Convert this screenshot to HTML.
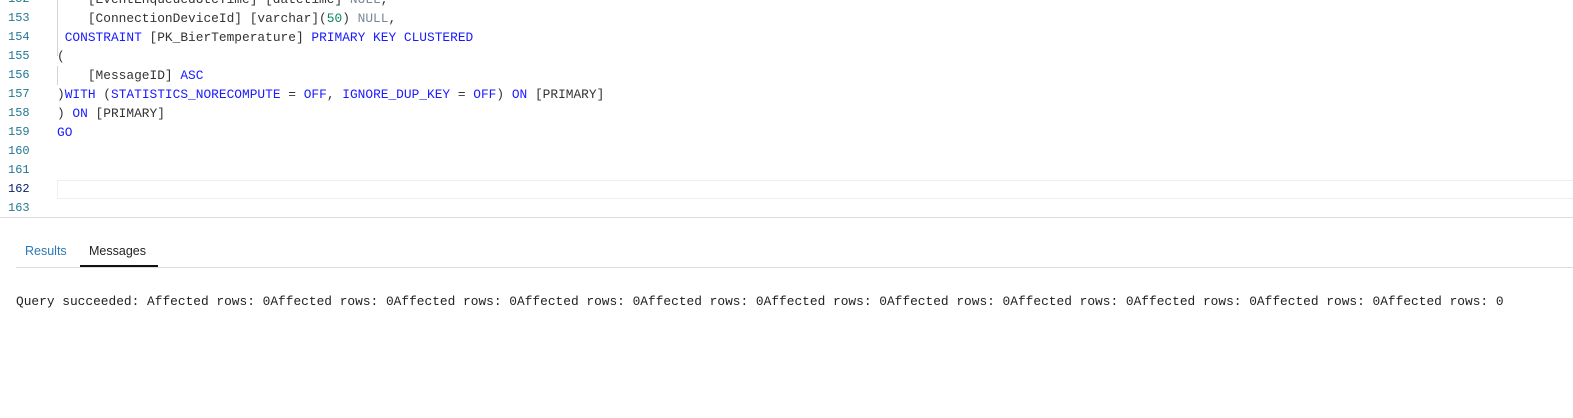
<!DOCTYPE html>
<html><head><meta charset="utf-8"><style>
body{margin:0;width:1573px;height:418px;background:#fff;overflow:hidden;position:relative;font-family:"Liberation Mono",monospace}
.ln{position:absolute;left:8px;font-size:12px;color:#237893;line-height:19px}
.cd{position:absolute;left:57px;font-size:12.85px;color:#333;line-height:19px;white-space:pre}
.k{color:#1a1aff}.g{color:#778899}.n{color:#09885a}
.guide{position:absolute;left:57px;width:1px;background:#d3d3d3}
</style></head><body>
<div class="guide" style="top:-1px;height:57px"></div>
<div class="guide" style="top:66px;height:19px"></div>
<div style="position:absolute;left:57px;top:180px;width:1530px;height:17px;border:1px solid #eee"></div>
<div class="ln" style="top:-10px">152<br>153<br>154<br>155<br>156<br>157<br>158<br>159<br>160<br>161<br><span style="color:#0b216f">162</span><br>163</div>
<div class="cd" style="top:-10px">    [EventEnqueuedUtcTime] [datetime] <span class="g">NULL</span>,
    [ConnectionDeviceId] [varchar](<span class="n">50</span>) <span class="g">NULL</span>,
 <span class="k">CONSTRAINT</span> [PK_BierTemperature] <span class="k">PRIMARY KEY CLUSTERED</span>
(
    [MessageID] <span class="k">ASC</span>
)<span class="k">WITH</span> (<span class="k">STATISTICS_NORECOMPUTE</span> = <span class="k">OFF</span>, <span class="k">IGNORE_DUP_KEY</span> = <span class="k">OFF</span>) <span class="k">ON</span> [PRIMARY]
) <span class="k">ON</span> [PRIMARY]
<span class="k">GO</span>
</div>
<div style="position:absolute;left:0;top:217px;width:1573px;height:1px;background:#ddd"></div>
<div style="position:absolute;left:25px;top:244px;font-family:'Liberation Sans',sans-serif;font-size:12.5px;color:#2a7ab5">Results</div>
<div style="position:absolute;left:89px;top:244px;font-family:'Liberation Sans',sans-serif;font-size:12.5px;color:#222">Messages</div>
<div style="position:absolute;left:16px;top:267px;width:1557px;height:1px;background:#ddd"></div>
<div style="position:absolute;left:80px;top:265px;width:78px;height:2px;background:#111"></div>
<div style="position:absolute;left:16px;top:294px;font-size:12.85px;color:#222;white-space:pre">Query succeeded: Affected rows: 0Affected rows: 0Affected rows: 0Affected rows: 0Affected rows: 0Affected rows: 0Affected rows: 0Affected rows: 0Affected rows: 0Affected rows: 0Affected rows: 0</div>
</body></html>
